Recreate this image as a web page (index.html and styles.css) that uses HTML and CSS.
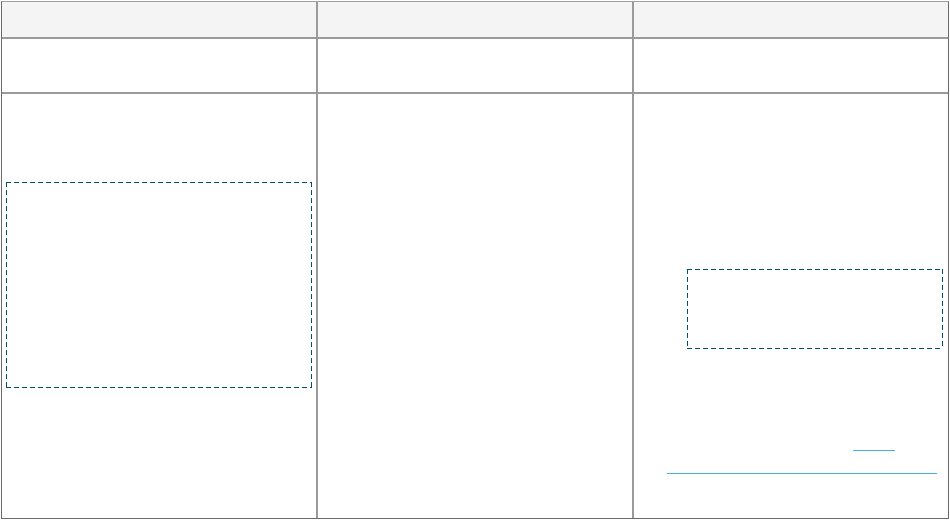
FILE: index.html
```html
<!DOCTYPE html>
<html lang="en">
<head>
    <meta charset="UTF-8">
    <meta name="viewport" content="width=device-width, initial-scale=1.0">
    <title>Table</title>
    <link rel="stylesheet" href="styles.css">
</head>
<body>
    <div class="table">
        <div class="cell head"></div>
        <div class="cell head"></div>
        <div class="cell head"></div>

        <div class="cell"></div>
        <div class="cell"></div>
        <div class="cell"></div>

        <div class="cell first">
            <div class="drop-box big"></div>
        </div>
        <div class="cell"></div>
        <div class="cell last">
            <div class="drop-box small"></div>
            <a class="link short" href="#"></a>
            <a class="link long" href="#"></a>
        </div>
    </div>
</body>
</html>
```

FILE: styles.css
```css
body {
    margin: 0;
    font-family: "Liberation Sans", Arial, sans-serif;
    background-color: #ffffff;
}

.table {
    margin: 1px;
    width: 948px;
    height: 518px;
    box-sizing: border-box;
    display: grid;
    grid-template-columns: 314px 314px 1fr;
    grid-template-rows: 35px 53px 1fr;
    gap: 2px;
    background-color: #9a9a9a;
    border: 1px solid #6a6a6a;
    border-top-color: #a0a0a0;
}

.cell {
    background-color: #ffffff;
}

.cell.head {
    background-color: #f4f4f4;
}

.cell.first {
    padding: 88px 4px 0 4px;
}

.cell.last {
    padding: 175px 0 0 53px;
}

/* dashed outline with longer dashes than the browser default */
.drop-box {
    background:
        repeating-linear-gradient(90deg, #014f6e 0 5px, transparent 5px 8px) top left / 100% 1px no-repeat,
        repeating-linear-gradient(90deg, #014f6e 0 5px, transparent 5px 8px) bottom left / 100% 1px no-repeat,
        repeating-linear-gradient(180deg, #014f6e 0 5px, transparent 5px 8px) top left / 1px 100% no-repeat,
        repeating-linear-gradient(180deg, #014f6e 0 5px, transparent 5px 8px) top right / 1px 100% no-repeat;
}

.drop-box.big {
    width: 306px;
    height: 206px;
}

.drop-box.small {
    width: 256px;
    height: 80px;
}

.link {
    display: block;
    height: 1px;
    background-color: #48b1e4;
}

.link.short {
    margin: 101px 0 0 166px;
    width: 42px;
}

.link.long {
    margin: 22px 0 0 -20px;
    width: 270px;
}
```
